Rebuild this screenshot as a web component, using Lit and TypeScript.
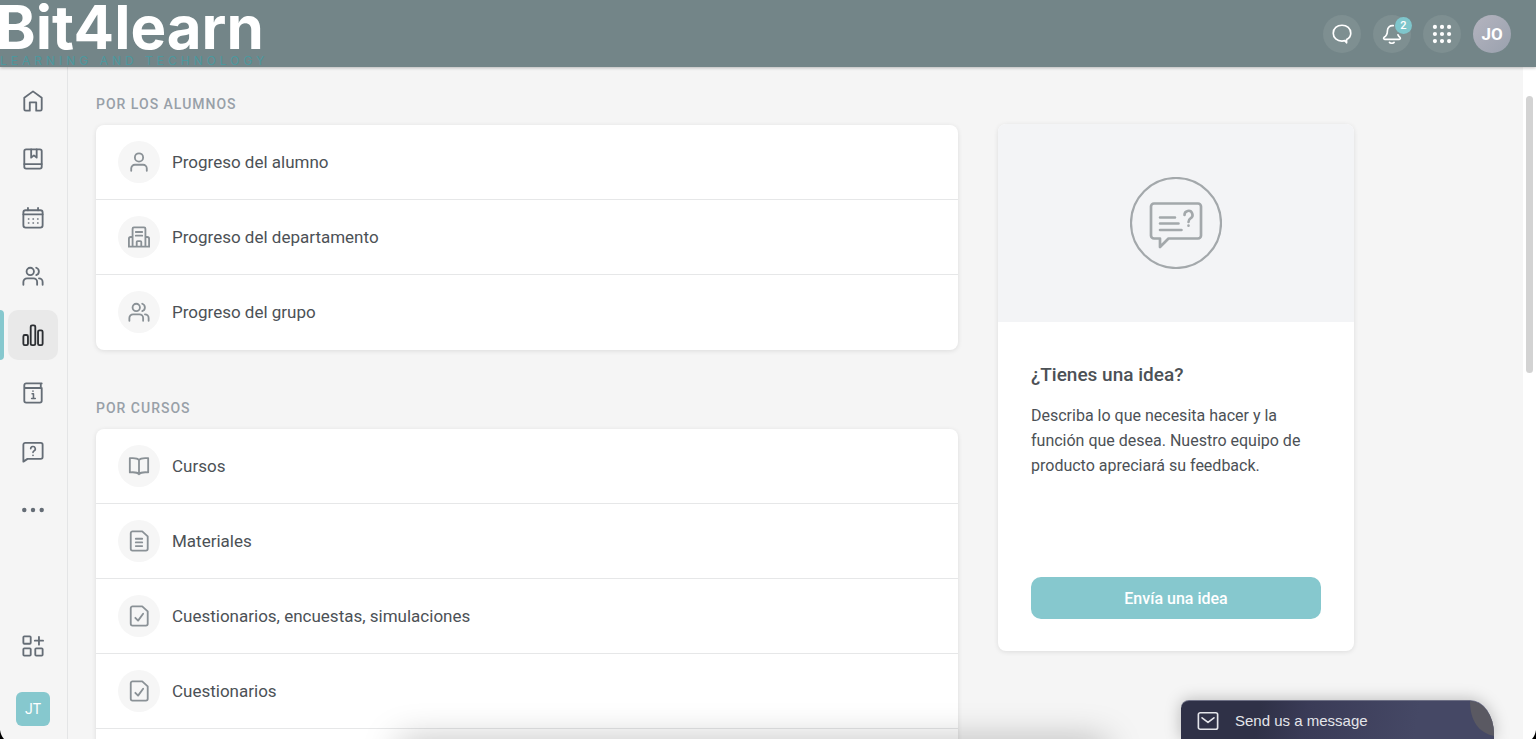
import { LitElement, html, css, svg } from "lit";
import { customElement } from "lit/decorators.js";

const people = svg`<circle cx="9" cy="7" r="4"/><path d="M1.500 21.500V18.500a4 4 0 0 1 4-4h7a4 4 0 0 1 4 4v3M15.500 3a4.200 4.200 0 0 1 0 8M18.500 14.500a4 4 0 0 1 4 4v3"/>`;

const icons: Record<string, unknown> = {
  home: svg`<path d="M2.500 8.500 12 1.500l9.500 7V21a1.500 1.500 0 0 1-1.500 1.500H15.500v-9h-7v9H4A1.500 1.500 0 0 1 2.500 21Z"/>`,
  book: svg`<rect x="2.500" y="1.500" width="19" height="21" rx="2"/><path d="M2.500 17.500h19M10 1.500v9l3-2.500 3 2.500v-9"/>`,
  calendar: svg`<rect x="1.500" y="3.500" width="21" height="19" rx="2.500"/><path d="M1.500 8h21M6.500 1v2.500M17.500 1v2.500"/><path stroke-width="1.600" d="M7 13h.5M12 13h.5M17 13h.5M7 17.500h.5M12 17.500h.5M17 17.500h.5"/>`,
  people,
  chart: svg`<rect x="1.500" y="12" width="5" height="11" rx="1.500"/><rect x="9.500" y="1.500" width="5" height="21.500" rx="1.500"/><rect x="17.500" y="7" width="5" height="16" rx="1.500"/>`,
  info: svg`<path d="M21.500 1.500H4.500a2 2 0 0 0-2 2v17a2 2 0 0 0 2 2h15a2 2 0 0 0 2-2V6.500H3M20.500 2v4"/><path stroke-width="1.700" d="M11 12.800h1.500v5M10.500 18h4M12 9.800v.3"/>`,
  help: svg`<path d="M1.500 22.500V4a2 2 0 0 1 2-2h17a2 2 0 0 1 2 2v13.500a2 2 0 0 1-2 2H6Z"/><path stroke-width="1.800" d="M9.500 8.500a2.500 2.500 0 1 1 3.500 2.300c-.8.400-1 .9-1 1.700M12 15.500v.3"/>`,
  more: svg`<g fill="currentColor" stroke="none"><circle cx="2.500" cy="12" r="2.400"/><circle cx="12" cy="12" r="2.400"/><circle cx="21.500" cy="12" r="2.400"/></g>`,
  add: svg`<rect x="1.500" y="1.500" width="8" height="8" rx="1"/><rect x="1.500" y="14.500" width="8" height="8" rx="1"/><rect x="14.500" y="14.500" width="8" height="8" rx="1"/><path d="M18.500 2v8.500M14 6.200h9"/>`,
  person: svg`<circle cx="12" cy="7" r="4.500"/><path d="M3.500 21.500v-2.500a4 4 0 0 1 4-4h9a4 4 0 0 1 4 4v2.500"/>`,
  building: svg`<path d="M.500 22.500h23M5 22.500V3a1.500 1.500 0 0 1 1.500-1.500h11A1.500 1.500 0 0 1 19 3v19.500M5 12H3a2 2 0 0 0-2 2v8.500M19 12h2a2 2 0 0 1 2 2v8.500M9.500 22.500v-5a1 1 0 0 1 1-1h3a1 1 0 0 1 1 1v5M8.500 6.500h7M8.500 10.500h7"/>`,
  open: svg`<path d="M12 5.500C10.500 3.500 7 3 2 3.500v15.500c5-.500 8.500 0 10 2 1.500-2 5-2.500 10-2V3.500C17 3 13.500 3.500 12 5.500ZM12 5.500V21"/>`,
  doc: svg`<path d="M5 1.500h10.500L21.500 7v13.500a2 2 0 0 1-2 2H5a2 2 0 0 1-2-2v-17a2 2 0 0 1 2-2Z"/><path d="M8.500 9.500h7M8.500 13.500h7M8.500 17.500h7"/>`,
  check: svg`<path d="M5 1.500h10.500L21.500 7v13.500a2 2 0 0 1-2 2H5a2 2 0 0 1-2-2v-17a2 2 0 0 1 2-2Z"/><path d="m8 14 3 3 5.500-7.500"/>`,
  chat: svg`<path d="M12 1.500C6 1.500 1.500 5.500 1.500 11S6 20.500 12 20.500c1.300 0 2.300-.2 3.300-.5L17.500 22.500v-4c3.500-1.700 5-4.300 5-7.500C22.500 5.500 18 1.500 12 1.500Z"/>`,
  bell: svg`<path d="M13.500 2C9.500 1.500 6.500 4 6.500 8c0 4.500-1.500 6.500-4 8-.9.600-.5 2.500.8 2.500h17.400c1.300 0 1.700-1.700.8-2.500-1-.8-1.800-1.800-2.300-3M9 22c1.200 1.400 4.300 1.400 5.500 0"/>`,
  apps: svg`<g fill="currentColor" stroke="none">${[3.5, 12, 20.5].map((y) => [3.5, 12, 20.5].map((x) => svg`<circle cx=${x} cy=${y} r="2.500"/>`))}</g>`,
  mail: svg`<rect x="1.500" y="3" width="21" height="18" rx="2"/><path d="m5.500 8.500 6.500 5 6.500-5"/>`,
};

const icon = (name: string) =>
  html`<svg class="icon" viewBox="0 0 24 24" aria-hidden="true">${icons[name]}</svg>`;

const nav = [
  ["home", "Inicio"],
  ["book", "Catálogo"],
  ["calendar", "Calendario"],
  ["people", "Usuarios"],
  ["chart", "Informes"],
  ["info", "Información"],
  ["help", "Ayuda"],
  ["more", "Más"],
];

const sections = [
  {
    title: "Por los alumnos",
    rows: [
      ["person", "Progreso del alumno"],
      ["building", "Progreso del departamento"],
      ["people", "Progreso del grupo"],
    ],
  },
  {
    title: "Por cursos",
    rows: [
      ["open", "Cursos"],
      ["doc", "Materiales"],
      ["check", "Cuestionarios, encuestas, simulaciones"],
      ["check", "Cuestionarios"],
    ],
  },
];

@customElement("app-root")
export class AppRoot extends LitElement {
  static styles = css`
    :host {
      display: flex;
      flex-direction: column;
      position: relative;
      height: 100vh;
      overflow: hidden;
      background: #f5f5f5;
      color: #4c5156;
      font-family: Roboto, "Liberation Sans", sans-serif;
      font-size: 17px;
    }
    *, *::before, *::after { box-sizing: border-box; }
    a { color: inherit; text-decoration: none; }
    button { border: 0; padding: 0; margin: 0; font: inherit; color: inherit; background: none; cursor: pointer; }
    h2, h3, p, ul { margin: 0; padding: 0; list-style: none; }
    .icon {
      width: 22px;
      height: 22px;
      flex: none;
      fill: none;
      stroke: currentColor;
      stroke-width: 2;
      stroke-linecap: round;
      stroke-linejoin: round;
    }
    .header {
      display: flex;
      justify-content: space-between;
      align-items: center;
      flex: none;
      height: 67px;
      padding-right: 25px;
      background: #738588;
      box-shadow: 0 1px 3px rgba(0, 0, 0, 0.25);
      z-index: 2;
    }
    .logo { display: flex; flex-direction: column; white-space: nowrap; }
    .logo-name {
      margin-left: -4px;
      font: 700 60px/54px Inter, sans-serif;
      color: #fff;
    }
    .logo-tag {
      font: 400 12px/13px Inter, sans-serif;
      letter-spacing: 4px;
      color: #4c989e;
    }
    .tools { display: flex; gap: 12px; }
    .tool {
      position: relative;
      display: grid;
      place-items: center;
      width: 38px;
      height: 38px;
      border-radius: 50%;
      background: #7e8f91;
      color: #fff;
    }
    .tool .icon { width: 20px; height: 20px; }
    .badge {
      position: absolute;
      top: 2px;
      right: -1px;
      width: 17px;
      height: 17px;
      border-radius: 50%;
      background: #7fc6cc;
      font-size: 11px;
      line-height: 17px;
      font-weight: 500;
      text-align: center;
    }
    .avatar { background: linear-gradient(135deg, #b4b4bf, #9aa1ae); font-weight: 700; }
    .body { display: flex; flex: 1; min-height: 0; }
    .sidebar {
      display: flex;
      flex-direction: column;
      align-items: center;
      flex: none;
      width: 68px;
      padding: 9px 1px 13px 0;
      border-right: 1px solid #e4e5e6;
      color: #656d76;
    }
    .nav {
      display: flex;
      flex-direction: column;
      justify-content: space-between;
      align-items: center;
      flex: 1;
      width: 100%;
    }
    .nav-item {
      position: relative;
      display: grid;
      place-items: center;
      width: 50px;
      height: 50px;
      border-radius: 10px;
    }
    .nav-item.active { background: #e9e9e9; color: #2c2f33; }
    .nav-item.active::before {
      content: "";
      position: absolute;
      left: -8px;
      top: 0;
      width: 4px;
      height: 50px;
      border-radius: 0 4px 4px 0;
      background: #86c8ce;
    }
    .foot { display: flex; flex-direction: column; align-items: center; gap: 21px; padding-top: 86px; }
    .team {
      width: 34px;
      height: 34px;
      border-radius: 6px;
      background: #86c8ce;
      color: #fff;
      font-size: 14px;
    }
    .main { flex: 1; min-width: 0; padding: 29px 28px 0; overflow: hidden; }
    .content {
      display: grid;
      grid-template-columns: minmax(0, 1fr) 356px;
      gap: 40px;
      align-items: start;
      max-width: 1258px;
    }
    .lists { display: flex; flex-direction: column; gap: 50px; }
    .title {
      margin-bottom: 13px;
      font-size: 14px;
      line-height: 16px;
      font-weight: 500;
      letter-spacing: 1px;
      text-transform: uppercase;
      color: #98a0a8;
    }
    .card {
      background: #fff;
      border-radius: 8px;
      box-shadow: 0 1px 5px rgba(0, 0, 0, 0.1);
      overflow: hidden;
    }
    .list { min-height: 225px; }
    .list.open { padding-bottom: 40px; }
    .row {
      display: flex;
      align-items: center;
      gap: 12px;
      height: 75px;
      padding: 0 22px;
      border-bottom: 1px solid #e6e7e8;
    }
    .list:not(.open) .item:last-child .row { border-bottom-color: transparent; }
    .bubble {
      display: grid;
      place-items: center;
      width: 42px;
      height: 42px;
      border-radius: 50%;
      background: #f6f6f6;
      color: #8a9196;
    }
    .idea { margin-top: 28px; }
    .art { display: grid; place-items: center; height: 198px; background: #f3f4f6; }
    .art-icon { width: 92px; height: 92px; fill: none; stroke: #a3a8ab; stroke-linecap: round; stroke-linejoin: round; }
    .idea-body { padding: 40px 33px 32px; }
    .idea-title { font-size: 19px; line-height: 25px; font-weight: 500; }
    .idea-text { margin-top: 16px; min-height: 174px; font-size: 16px; line-height: 25px; }
    .send {
      width: 100%;
      height: 42px;
      border-radius: 10px;
      background: #86c8ce;
      color: #fff;
      font-size: 16px;
      font-weight: 500;
    }
    .scroll { flex: none; width: 13px; padding: 29px 3px; background: #fff; }
    .thumb { width: 7px; height: 277px; border-radius: 4px; background: #d3d3d3; }
    .shade {
      position: absolute;
      left: 26%;
      right: 28%;
      bottom: -32px;
      height: 30px;
      box-shadow: 0 0 36px rgba(0, 0, 0, 0.28);
    }
    .message {
      position: absolute;
      right: 42px;
      bottom: 0;
      display: flex;
      align-items: center;
      gap: 16px;
      width: 313px;
      height: 39px;
      padding: 2px 16px 0;
      border-radius: 8px 24px 0 0 / 8px 34px 0 0;
      border-top: 1px solid #6e7085;
      background: linear-gradient(100deg, #2f3147 25%, #3a3b57 40%, #454865 75%);
      box-shadow: 0 0 16px rgba(0, 0, 0, 0.25);
      color: #e4e5ea;
      font: 15px/18px "Liberation Sans", sans-serif;
      overflow: hidden;
    }
    .message .icon { stroke-width: 1.800; }
    .fold { position: absolute; right: 0; top: 0; width: 24px; height: 35px; fill: #5a5962; }
    .corner { position: absolute; bottom: 0; width: 4px; height: 9px; fill: #000; }
    .corner.left { left: 0; }
    .corner.right { right: 0; }
  `;

  render() {
    return html`
      <header class="header">
        <a class="logo" href="#">
          <span class="logo-name">Bit4learn</span>
          <span class="logo-tag">LEARNING AND TECHNOLOGY</span>
        </a>
        <div class="tools">
          <button class="tool" aria-label="Mensajes">${icon("chat")}</button>
          <button class="tool" aria-label="Notificaciones">${icon("bell")}<span class="badge">2</span></button>
          <button class="tool" aria-label="Aplicaciones">${icon("apps")}</button>
          <button class="tool avatar">JO</button>
        </div>
      </header>
      <div class="body">
        <aside class="sidebar">
          <nav class="nav">
            ${nav.map(
              ([name, label]) => html`<a class="nav-item ${name === "chart" ? "active" : ""}" href="#" aria-label=${label}>${icon(name)}</a>`
            )}
          </nav>
          <div class="foot">
            <button class="nav-item" aria-label="Añadir">${icon("add")}</button>
            <button class="team">JT</button>
          </div>
        </aside>
        <main class="main">
          <div class="content">
            <div class="lists">
              ${sections.map(
                (s, i) => html`<section>
                  <h2 class="title">${s.title}</h2>
                  <ul class="card list ${i === sections.length - 1 ? "open" : ""}">
                    ${s.rows.map(
                      ([name, label]) => html`<li class="item">
                        <a class="row" href="#"><span class="bubble">${icon(name)}</span>${label}</a>
                      </li>`
                    )}
                  </ul>
                </section>`
              )}
            </div>
            <section class="card idea">
              <div class="art">
                <svg class="art-icon" viewBox="0 0 92 92" aria-hidden="true">
                  <circle cx="46" cy="46" r="45" stroke-width="2.200" />
                  <path stroke-width="2.700" d="M24 26.500h44a3 3 0 0 1 3 3v29a3 3 0 0 1-3 3H38.500L30 70v-8.500h-6a3 3 0 0 1-3-3v-29a3 3 0 0 1 3-3Z" />
                  <path stroke-width="2.600" d="M30 40.500h15M30 46.500h18.500M30 53h21.500M54.500 38a4 4 0 1 1 6 3.300c-1.600 1-2 1.900-2 3.700M58.500 48.500v.200" />
                </svg>
              </div>
              <div class="idea-body">
                <h3 class="idea-title">¿Tienes una idea?</h3>
                <p class="idea-text">
                  Describa lo que necesita hacer y la función que desea. Nuestro equipo de producto apreciará su feedback.
                </p>
                <button class="send">Envía una idea</button>
              </div>
            </section>
          </div>
        </main>
        <div class="scroll"><div class="thumb"></div></div>
      </div>
      <div class="shade"></div>
      <button class="message">
        ${icon("mail")}Send us a message
        <svg class="fold" viewBox="0 0 24 35" aria-hidden="true"><path d="M0 0H24V35C9 32 0 20 0 0Z" /></svg>
      </button>
      <svg class="corner left" viewBox="0 0 4 9" aria-hidden="true"><path d="M0 0Q1 6 4 9H0Z" /></svg>
      <svg class="corner right" viewBox="0 0 4 9" aria-hidden="true"><path d="M4 0Q3 6 0 9H4Z" /></svg>
    `;
  }
}
